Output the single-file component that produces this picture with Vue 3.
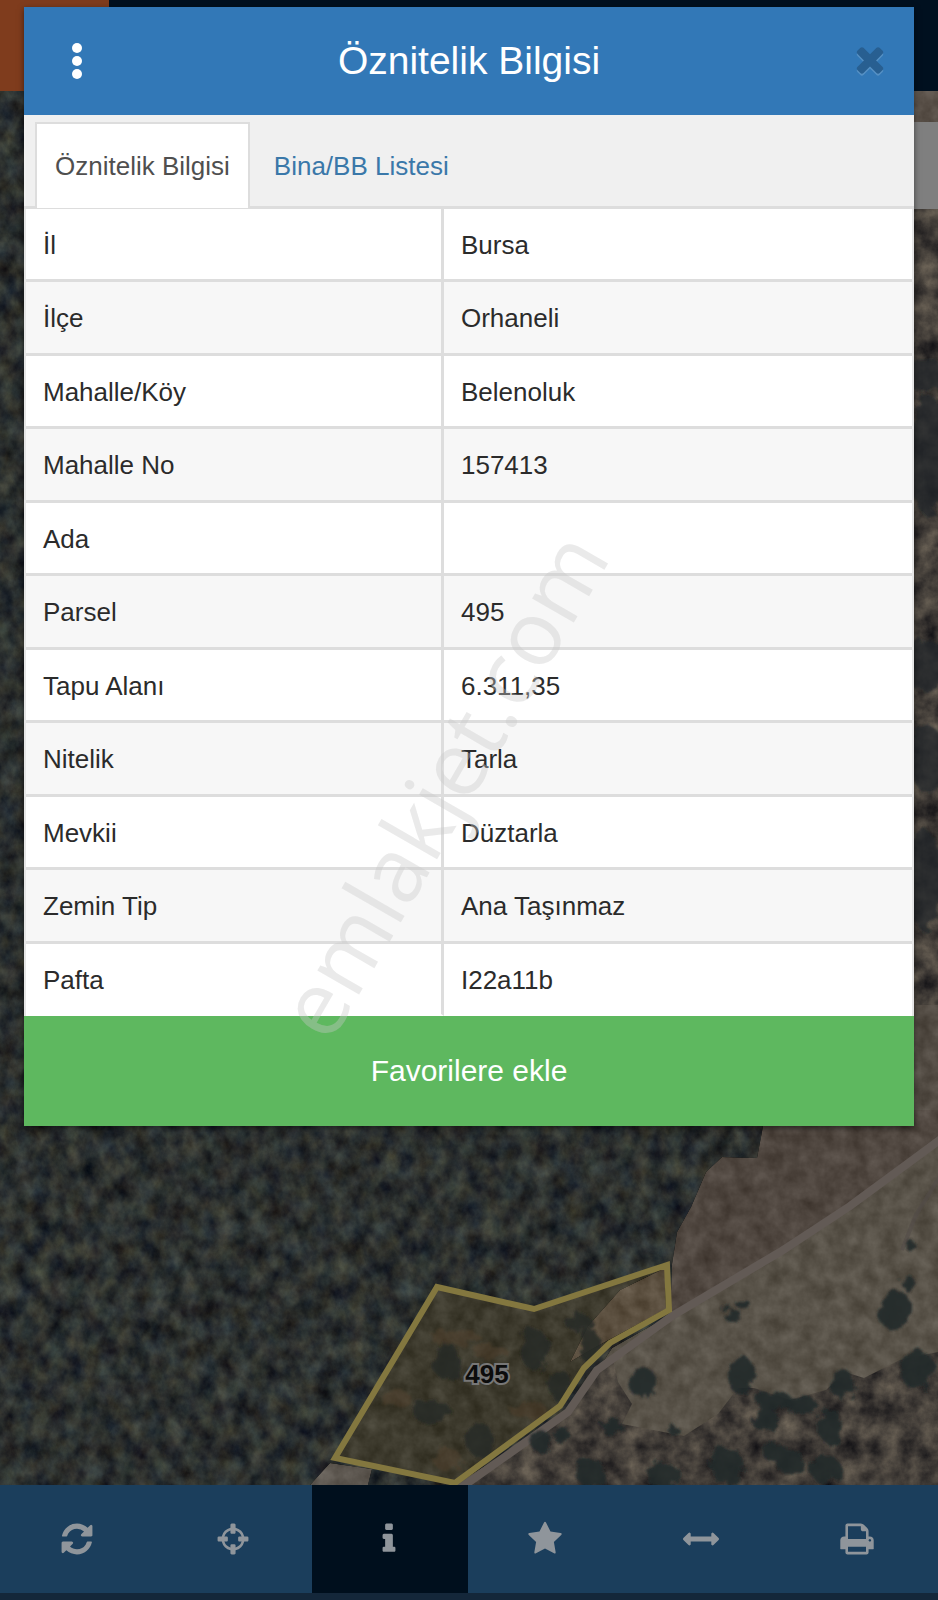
<template>
  <div class="app">
    <header class="topbar">
      <div class="topbar-brand"></div>
    </header>

    <main class="map">
      <svg class="map-image" viewBox="0 91 938 1394" preserveAspectRatio="xMidYMax slice" aria-hidden="true">
        <defs>
          <filter id="forest" x="0" y="0" width="100%" height="100%" color-interpolation-filters="sRGB">
            <feTurbulence type="fractalNoise" baseFrequency="0.06 0.05" numOctaves="5" seed="7" />
            <feColorMatrix values="0.30 0.08 0 0 -0.02  0.32 0.02 0 0 0.015  0.24 -0.04 0.05 0 0.055  0 0 0 0 1" />
            <feComposite in2="SourceGraphic" operator="in" />
          </filter>
          <filter id="scrub" x="0" y="0" width="100%" height="100%" color-interpolation-filters="sRGB">
            <feTurbulence type="fractalNoise" baseFrequency="0.05" numOctaves="5" seed="12" />
            <feColorMatrix values="0.44 0 0 0 0.04  0.40 0 0 0 0.04  0.32 0 0 0 0.06  0 0 0 0 1" />
            <feComposite in2="SourceGraphic" operator="in" />
          </filter>
          <filter id="soil" x="0" y="0" width="100%" height="100%" color-interpolation-filters="sRGB">
            <feTurbulence type="fractalNoise" baseFrequency="0.06" numOctaves="4" seed="3" result="noise" />
            <feColorMatrix in="noise" values="0.3 0 0 0 0  0.3 0 0 0 0  0.3 0 0 0 0  0 0 0 0 1" result="grain" />
            <feComposite in="SourceGraphic" in2="grain" operator="arithmetic" k2="1" k3="0.6" k4="-0.09" result="mix" />
            <feComposite in="mix" in2="SourceGraphic" operator="in" />
          </filter>
          <filter id="rough" x="-20%" y="-20%" width="140%" height="140%">
            <feTurbulence type="fractalNoise" baseFrequency="0.08" numOctaves="3" seed="5" />
            <feDisplacementMap in="SourceGraphic" scale="14" />
            <feGaussianBlur stdDeviation="1" />
          </filter>
        </defs>

        <rect x="0" y="91" width="938" height="1394" filter="url(#forest)" />
        <path d="M900 91h38v1040h-38z" filter="url(#scrub)" />
        <path d="M900 91h38v31h-38z" fill="#5b524a" filter="url(#soil)" />
        <g filter="url(#rough)" fill="#20262a" opacity="0.75">
          <ellipse cx="925" cy="375" rx="22" ry="16" />
          <ellipse cx="928" cy="455" rx="20" ry="60" />
          <ellipse cx="925" cy="665" rx="24" ry="26" />
          <ellipse cx="928" cy="760" rx="18" ry="34" />
          <ellipse cx="924" cy="880" rx="18" ry="50" />
        </g>
        <path d="M900 1005h38v150h-38z" fill="#544d45" filter="url(#soil)" />

        <!-- fields -->
        <g filter="url(#soil)">
          <path d="M766 1110L757 1158 722 1157 706 1172 691 1207 677 1232 672 1264 670 1318 790 1250 938 1138V1110z" fill="#4f463f" />
          <path d="M938 1136L850 1205 668 1316 612 1348 572 1410 455 1485H938z" fill="#585248" />
          <path d="M310 1485L330 1463 372 1469 368 1485z" fill="#5a544d" />
        </g>

        <!-- scrubland under the field -->
        <path d="M612 1356L618 1382 632 1404 622 1424 684 1436 718 1414 738 1388 754 1388 790 1400 826 1390 845 1372 864 1378 900 1360 938 1352V1485H462L560 1418 588 1376z" filter="url(#scrub)" />

        <!-- dirt roads -->
        <path d="M455 1492L568 1412 597 1370 672 1316 780 1252 850 1206 945 1136" fill="none" stroke="#625a55" stroke-width="8" />
        <path d="M950 1160L916 1215 902 1250" fill="none" stroke="#524b47" stroke-width="4" opacity="0.6" />

        <!-- parcel -->
        <path d="M437 1287L534 1309 667 1265 669 1310 610 1343 584 1368 560 1406 455 1483 335 1458z" fill="#3d3a2d" filter="url(#soil)" />
        <path d="M588 1326L620 1290 665 1268 666 1309 594 1348 570 1362z" fill="#5c5040" filter="url(#soil)" />
        <g filter="url(#rough)" fill="#282b27" opacity="0.85">
          <ellipse cx="447" cy="1362" rx="14" ry="18" />
          <ellipse cx="432" cy="1412" rx="19" ry="12" />
          <ellipse cx="535" cy="1350" rx="15" ry="20" />
          <ellipse cx="590" cy="1346" rx="10" ry="18" />
          <ellipse cx="560" cy="1386" rx="12" ry="16" />
          <ellipse cx="480" cy="1440" rx="14" ry="17" />
          <ellipse cx="578" cy="1322" rx="13" ry="10" />
        </g>
        <g filter="url(#rough)" fill="#54432f" opacity="0.45">
          <ellipse cx="456" cy="1338" rx="26" ry="8" />
          <ellipse cx="490" cy="1352" rx="18" ry="7" />
          <ellipse cx="395" cy="1398" rx="16" ry="8" />
          <ellipse cx="528" cy="1410" rx="18" ry="10" />
          <ellipse cx="448" cy="1460" rx="14" ry="12" />
        </g>
        <path d="M437 1287L534 1309 667 1265 669 1310 610 1343 584 1368 560 1406 455 1483 335 1458z" fill="none" stroke="#83773f" stroke-width="6" />

        <!-- trees -->
        <g filter="url(#rough)" fill="#23292a" opacity="0.9">
          <ellipse
            v-for="(tree, i) in trees"
            :key="i"
            :cx="tree[0]"
            :cy="tree[1]"
            :rx="tree[2]"
            :ry="tree[3]"
          />
        </g>

        <text x="487" y="1383" class="parcel-label">495</text>
      </svg>
      <div class="map-control"></div>
    </main>

    <nav class="toolbar">
      <button
        v-for="tool in tools"
        :key="tool.name"
        type="button"
        class="tool"
        :class="{ active: tool.name === activeTool }"
        :aria-label="tool.name"
        @click="activeTool = tool.name"
      >
        <svg class="tool-icon" viewBox="0 0 1792 1792" aria-hidden="true">
          <path :d="tool.path" />
        </svg>
      </button>
    </nav>

    <section class="modal" role="dialog" aria-labelledby="modal-title">
      <div class="modal-header">
        <button type="button" class="icon-button" aria-label="Menü">
          <svg class="menu-icon" viewBox="0 0 10 36" aria-hidden="true">
            <circle cx="5" cy="5" r="5" />
            <circle cx="5" cy="18" r="5" />
            <circle cx="5" cy="31" r="5" />
          </svg>
        </button>
        <h1 id="modal-title" class="modal-title">Öznitelik Bilgisi</h1>
        <button type="button" class="icon-button close-button" aria-label="Kapat">
          <svg class="close-icon" viewBox="0 90 1792 1792" aria-hidden="true">
            <path d="M1490 1322q0 40-28 68l-136 136q-28 28-68 28t-68-28l-294-294-294 294q-28 28-68 28t-68-28l-136-136q-28-28-28-68t28-68l294-294-294-294q-28-28-28-68t28-68l136-136q28-28 68-28t68 28l294 294 294-294q28-28 68-28t68 28l136 136q28 28 28 68t-28 68l-294 294 294 294q28 28 28 68z" />
          </svg>
        </button>
      </div>

      <div class="tabs" role="tablist">
        <button
          v-for="tab in tabs"
          :key="tab"
          type="button"
          role="tab"
          class="tab"
          :class="{ active: tab === activeTab }"
          :aria-selected="tab === activeTab"
          @click="activeTab = tab"
        >
          {{ tab }}
        </button>
      </div>

      <table class="attributes">
        <tbody>
          <tr v-for="row in rows" :key="row.label">
            <th scope="row">{{ row.label }}</th>
            <td>{{ row.value }}</td>
          </tr>
        </tbody>
      </table>

      <button type="button" class="favorite-button">Favorilere ekle</button>
    </section>

    <svg class="watermark" viewBox="0 0 938 1600" aria-hidden="true">
      <text transform="translate(330 1045) rotate(-60)">emlakjet.com</text>
    </svg>
  </div>
</template>

<script setup>
import { ref } from 'vue';

const tabs = ['Öznitelik Bilgisi', 'Bina/BB Listesi'];
const activeTab = ref('Öznitelik Bilgisi');
const activeTool = ref('Bilgi');

const rows = [
  { label: 'İl', value: 'Bursa' },
  { label: 'İlçe', value: 'Orhaneli' },
  { label: 'Mahalle/Köy', value: 'Belenoluk' },
  { label: 'Mahalle No', value: '157413' },
  { label: 'Ada', value: '' },
  { label: 'Parsel', value: '495' },
  { label: 'Tapu Alanı', value: '6.311,35' },
  { label: 'Nitelik', value: 'Tarla' },
  { label: 'Mevkii', value: 'Düztarla' },
  { label: 'Zemin Tip', value: 'Ana Taşınmaz' },
  { label: 'Pafta', value: 'I22a11b' }
];

// cx, cy, rx, ry
const trees = [
  [642, 1382, 14, 15],
  [732, 1315, 8, 7],
  [744, 1305, 8, 4],
  [895, 1310, 17, 20],
  [909, 1284, 6, 8],
  [918, 1370, 17, 19],
  [741, 1375, 13, 20],
  [842, 1384, 12, 15],
  [541, 1442, 11, 10],
  [562, 1436, 8, 8],
  [611, 1426, 11, 9],
  [673, 1430, 6, 4],
  [590, 1472, 15, 15],
  [664, 1476, 18, 13],
  [727, 1466, 16, 19],
  [790, 1462, 14, 12],
  [830, 1426, 13, 17],
  [775, 1402, 18, 10],
  [775, 1452, 13, 9],
  [826, 1470, 16, 14],
  [765, 1420, 14, 11],
  [803, 1405, 14, 9],
  [910, 1245, 4, 6]
];

const tools = [
  {
    name: 'Yenile',
    path: 'M1639 1056q0 5-1 7-64 268-268 434.5t-478 166.5q-146 0-282.5-55t-243.5-157l-129 129q-19 19-45 19t-45-19-19-45v-448q0-26 19-45t45-19h448q26 0 45 19t19 45-19 45l-137 137q71 66 161 102t187 36q134 0 250-65t186-179q11-17 53-117 8-23 30-23h192q13 0 22.5 9.5t9.5 22.5zm25-800v448q0 26-19 45t-45 19h-448q-26 0-45-19t-19-45 19-45l138-138q-148-137-349-137-134 0-250 65t-186 179q-11 17-53 117-8 23-30 23h-199q-13 0-22.5-9.5t-9.5-22.5v-7q65-268 270-434.5t480-166.5q146 0 284 55.5t245 156.5l130-129q19-19 45-19t45 19 19 45z'
  },
  {
    name: 'Konum',
    path: 'M1325 1024h-109q-26 0-45-19t-19-45v-128q0-26 19-45t45-19h109q-32-108-112.5-188.5t-188.5-112.5v109q0 26-19 45t-45 19h-128q-26 0-45-19t-19-45v-109q-108 32-188.5 112.5t-112.5 188.5h109q26 0 45 19t19 45v128q0 26-19 45t-45 19h-109q32 108 112.5 188.5t188.5 112.5v-109q0-26 19-45t45-19h128q26 0 45 19t19 45v109q108-32 188.5-112.5t112.5-188.5zm339-192v128q0 26-19 45t-45 19h-143q-37 161-154.5 278.5t-278.5 154.5v143q0 26-19 45t-45 19h-128q-26 0-45-19t-19-45v-143q-161-37-278.5-154.5t-154.5-278.5h-143q-26 0-45-19t-19-45v-128q0-26 19-45t45-19h143q37-161 154.5-278.5t278.5-154.5v-143q0-26 19-45t45-19h128q26 0 45 19t19 45v143q161 37 278.5 154.5t154.5 278.5h143q26 0 45 19t19 45z'
  },
  {
    name: 'Bilgi',
    path: 'M1216 1344v128q0 26-19 45t-45 19h-512q-26 0-45-19t-19-45v-128q0-26 19-45t45-19h64v-384h-64q-26 0-45-19t-19-45v-128q0-26 19-45t45-19h384q26 0 45 19t19 45v576h64q26 0 45 19t19 45zm-128-1152v192q0 26-19 45t-45 19h-256q-26 0-45-19t-19-45v-192q0-26 19-45t45-19h256q26 0 45 19t19 45z'
  },
  {
    name: 'Favoriler',
    path: 'M1728 647q0 22-26 48l-363 354 86 500q1 7 1 20 0 21-10.5 35.5t-30.5 14.5q-19 0-40-12l-449-236-449 236q-22 12-40 12-21 0-31.5-14.5t-10.5-35.5q0-6 2-20l86-500-364-354q-25-27-25-48 0-37 56-46l502-73 225-455q19-41 49-41t49 41l225 455 502 73q56 9 56 46z'
  },
  {
    name: 'Ölçüm',
    path: 'M1792 896q0 26-19 45l-256 256q-19 19-45 19t-45-19-19-45v-128h-1024v128q0 26-19 45t-45 19-45-19l-256-256q-19-19-19-45t19-45l256-256q19-19 45-19t45 19 19 45v128h1024v-128q0-26 19-45t45-19 45 19l256 256q19 19 19 45z'
  },
  {
    name: 'Yazdır',
    path: 'M448 1536h896v-256h-896v256zm0-640h896v-384h-160q-40 0-68-28t-28-68v-160h-640v640zm1152 64q0-26-19-45t-45-19-45 19-19 45 19 45 45 19 45-19 19-45zm128 0v416q0 13-9.5 22.5t-22.5 9.5h-224v160q0 40-28 68t-68 28h-960q-40 0-68-28t-28-68v-160h-224q-13 0-22.5-9.5t-9.5-22.5v-416q0-79 56.5-135.5t135.5-56.5h64v-544q0-40 28-68t68-28h672q40 0 88 20t76 48l152 152q28 28 48 76t20 88v256h64q79 0 135.5 56.5t56.5 135.5z'
  }
];
</script>

<style>
body {
  margin: 0;
  background: #14273a;
}
</style>

<style scoped>
.app {
  position: relative;
  display: flex;
  flex-direction: column;
  min-height: 100vh;
  overflow: hidden;
  font-family: "Liberation Sans", Arial, Helvetica, sans-serif;
  font-size: 26px;
  color: #2b2b2b;
}

button {
  font: inherit;
  color: inherit;
  margin: 0;
  padding: 0;
  border: 0;
  background: none;
  cursor: pointer;
}

/* Page behind the dialog */
.topbar {
  height: 91px;
  background: #00101f;
}

.topbar-brand {
  width: 109px;
  height: 100%;
  background: #7f3c1d;
}

.map {
  position: relative;
  flex: 1;
  background: #2a2f2e;
}

.map-image {
  position: absolute;
  inset: 0;
  width: 100%;
  height: 100%;
}

.map-control {
  position: absolute;
  top: 31px;
  right: 0;
  width: 40px;
  height: 87px;
  background: #7f7f7f;
}

.parcel-label {
  font-size: 26px;
  font-weight: 700;
  text-anchor: middle;
  fill: #0c0c0c;
  stroke: #777777;
  stroke-width: 4px;
  paint-order: stroke;
}

.toolbar {
  display: flex;
  padding-right: 2px;
  background: #1b3e5c;
  border-bottom: 7px solid #14273a;
}

.tool {
  flex: 1;
  display: flex;
  align-items: center;
  justify-content: center;
  height: 108px;
  padding-right: 3px;
}

.tool.active {
  background: #000f1d;
}

.tool-icon {
  width: 36px;
  height: 36px;
  fill: #8f959b;
}

/* Dialog */
.modal {
  position: absolute;
  top: 7px;
  left: 24px;
  right: 24px;
  background: #ffffff;
  box-shadow: 0 2px 6px rgba(0, 0, 0, 0.5);
}

.modal-header {
  display: flex;
  align-items: center;
  justify-content: space-between;
  height: 108px;
  padding: 0 9px;
  background: #3278b7;
}

.modal-title {
  margin: 0;
  font-size: 39px;
  font-weight: 400;
  color: #ffffff;
}

.icon-button {
  display: flex;
  align-items: center;
  justify-content: center;
  width: 88px;
  height: 72px;
}

.close-button {
  justify-content: flex-end;
  padding-right: 15px;
}

.menu-icon {
  width: 10px;
  height: 36px;
  fill: #ffffff;
}

.close-icon {
  width: 40px;
  height: 40px;
  fill: #285f91;
  filter: drop-shadow(0 2px 0 #5590c4);
}

.tabs {
  display: flex;
  gap: 4px;
  padding: 7px 11px 0;
  background: #f0f0f0;
  border-bottom: 3px solid #dddddd;
}

.tab {
  height: 86px;
  margin-bottom: -2px;
  padding: 0 18px;
  border: 2px solid transparent;
  border-bottom: 0;
  color: #3a78a9;
}

.tab.active {
  border-color: #dddddd;
  background: #ffffff;
  color: #4f4f4f;
}

.attributes {
  width: 100%;
  border: 0 solid #e6e6e6;
  border-width: 0 2px;
  border-collapse: separate;
  border-spacing: 0;
  table-layout: fixed;
}

.attributes th,
.attributes td {
  height: 68px;
  padding: 2px 17px 0;
  border-bottom: 3px solid #dddddd;
  font-weight: 400;
  text-align: left;
}

.attributes th {
  width: 43%;
  border-right: 3px solid #dddddd;
}

.attributes tr:nth-child(even) > * {
  height: 69px;
  background: #f7f7f7;
}

.attributes tr:last-child > * {
  border-bottom: 2px solid #ffffff;
}

.favorite-button {
  display: block;
  width: 100%;
  height: 110px;
  background: #5eb85f;
  color: #ffffff;
  font-size: 30px;
}

.watermark {
  position: absolute;
  inset: 0;
  width: 100%;
  height: 100%;
  pointer-events: none;
}

.watermark text {
  font-family: "Open Sans", "Noto Sans", sans-serif;
  font-size: 90px;
  fill: #c8c8c8;
  fill-opacity: 0.38;
}
</style>
